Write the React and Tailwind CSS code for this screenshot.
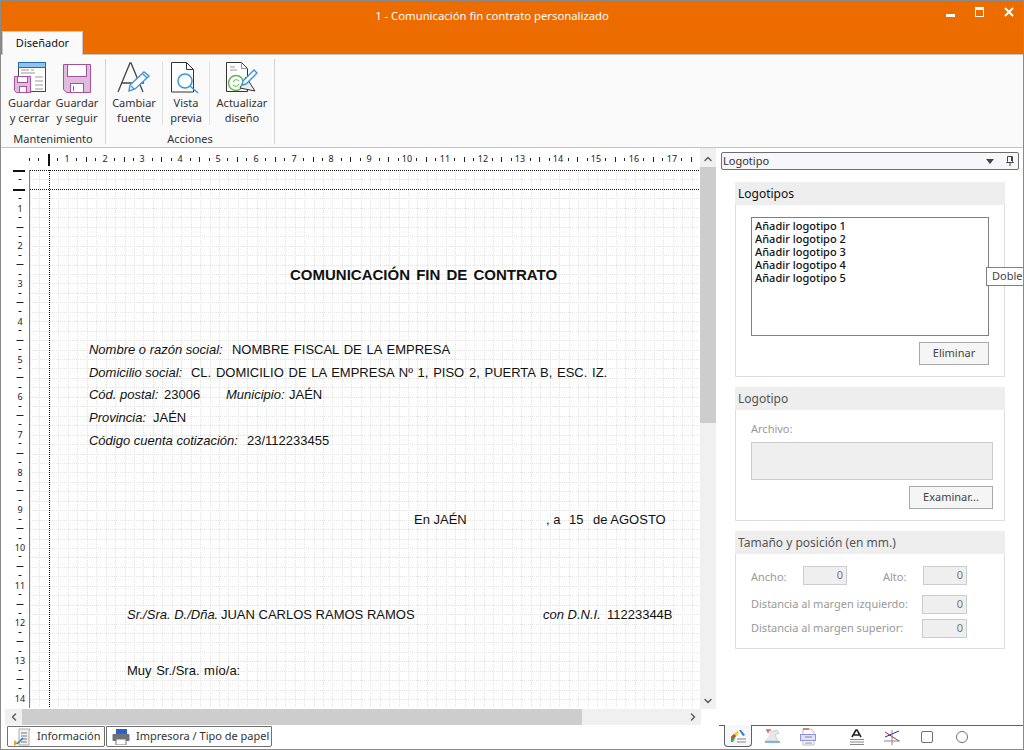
import { ChevronUp, ChevronDown, ChevronLeft, ChevronRight } from 'lucide-react'

const ui = 'font-["Noto_Sans",sans-serif]'

function range(n) {
  return Array.from({ length: n }, (_, i) => i)
}

function SaveCloseIcon() {
  return (
    <svg width="32" height="32" viewBox="0 0 32 32">
      <rect x="4.5" y="0.5" width="27" height="29" fill="#fff" stroke="#444" />
      <rect x="4.5" y="0.5" width="27" height="5" fill="#90c4ee" stroke="#1f6fb5" />
      <path d="M7 8h8M17 8h3M7 11h14M21 15h8M21 19h8M21 23h8M21 27h8" stroke="#999" strokeWidth="1" />
      <path d="M0.5 14.5h16v16h-14l-2-2z" fill="#e0bcdc" stroke="#a850a0" />
      <rect x="3.5" y="14.5" width="10" height="6" fill="#fff" stroke="#a850a0" />
      <rect x="5.5" y="24.5" width="7" height="6" fill="#fff" stroke="#a850a0" />
    </svg>
  )
}

function SaveIcon() {
  return (
    <svg width="30" height="30" viewBox="0 0 30 30">
      <path d="M1.5 0.5h27v28h-24l-3-3z" fill="#e0bcdc" stroke="#a850a0" />
      <rect x="5.5" y="0.5" width="19" height="12" fill="#fff" stroke="#a850a0" />
      <rect x="8.5" y="19.5" width="13" height="9" fill="#fff" stroke="#a850a0" />
      <path d="M11.5 22v5" stroke="#a850a0" />
    </svg>
  )
}

function FontIcon() {
  return (
    <svg width="34" height="32" viewBox="0 0 34 32">
      <path d="M1 30L13 1h1l12 29M5 21h22" fill="none" stroke="#444" strokeWidth="1.3" />
      <path d="M12 29l1-6L27 10l5 4-14 13z" fill="#fff" stroke="#3a96d8" strokeWidth="1.4" />
      <path d="M14 24l3 3M26 12l4 4" stroke="#3a96d8" strokeWidth="1.3" />
    </svg>
  )
}

function PreviewIcon() {
  return (
    <svg width="30" height="32" viewBox="0 0 30 32">
      <path d="M0.5 0.5h15l7 7v22.5h-22z" fill="#fff" stroke="#333" />
      <path d="M15.5 0.5v7h7" fill="none" stroke="#333" />
      <circle cx="14" cy="19" r="7" fill="#fff" stroke="#3a96d8" strokeWidth="1.5" />
      <path d="M19 24l8 7" stroke="#3a96d8" strokeWidth="1.5" />
    </svg>
  )
}

function RefreshIcon() {
  return (
    <svg width="32" height="32" viewBox="0 0 32 32">
      <path d="M0.5 0.5h15l6 6v23h-21z" fill="#fff" stroke="#333" />
      <path d="M15.5 0.5v6h6M4 5h5M4 8h7" fill="none" stroke="#999" />
      <circle cx="10" cy="21" r="7.5" fill="none" stroke="#5cb84c" strokeWidth="1.5" />
      <path d="M7 20a3.5 3.5 0 0 1 6-1M13 22a3.5 3.5 0 0 1-6 1" fill="none" stroke="#5cb84c" />
      <path d="M14 26l6-11 9 14z" fill="#eee" stroke="#333" />
      <path d="M16 23l1-4 11-11 3 3-11 11z" fill="#fff" stroke="#3a96d8" strokeWidth="1.4" />
    </svg>
  )
}

function RibbonButton({ icon, lines, className }) {
  return (
    <div className={`flex flex-col items-center ${className}`}>
      <div className="flex h-[32px] items-end justify-center">{icon}</div>
      <div className="mt-[1px] text-center text-[11px] leading-[15px] text-[#333]">
        {lines.map((l) => (
          <div key={l} className="whitespace-nowrap">{l}</div>
        ))}
      </div>
    </div>
  )
}

function TitleBar() {
  return (
    <div className="relative h-[53px] shrink-0 bg-[#ec6c00]">
      <div className="pr-[40px] pt-[6px] text-center text-[11.3px] leading-[18px] text-white">
        1 - Comunicación fin contrato personalizado
      </div>
      <div className="absolute right-[9px] top-[6px] flex items-start gap-[20px]">
        <div className="mt-[7px] h-[3px] w-[9px] bg-white" />
        <div className="h-[10px] w-[9px] border border-t-[3px] border-white" />
        <svg width="10" height="10" viewBox="0 0 10 10">
          <path d="M1 1l8 8M9 1l-8 8" stroke="#fff" strokeWidth="2" />
        </svg>
      </div>
      <div className="absolute bottom-[-1px] left-[1px] flex h-[24px] w-[81px] items-center justify-center border border-b-0 border-[#c8c8c8] bg-[#fafafa] text-[11px] text-[#111]">
        Diseñador
      </div>
    </div>
  )
}

function Ribbon() {
  return (
    <div className="flex h-[94px] shrink-0 border-t border-b border-[#c4c4c4] bg-[#fafafa] pt-[4px]">
      <div className="flex w-[104px] shrink-0 flex-col">
        <div className="flex pl-[5px] pt-[3px]">
          <RibbonButton icon={<SaveCloseIcon />} lines={['Guardar', 'y cerrar']} className="w-[47px]" />
          <RibbonButton icon={<SaveIcon />} lines={['Guardar', 'y seguir']} className="w-[48px]" />
        </div>
        <div className="mt-[6px] text-center text-[11px] leading-[15px] text-[#333]">Mantenimiento</div>
      </div>
      <div className="h-[85px] w-px shrink-0 bg-[#d4d4d4]" />
      <div className="flex w-[168px] shrink-0 flex-col">
        <div className="flex pt-[3px]">
          <RibbonButton icon={<FontIcon />} lines={['Cambiar', 'fuente']} className="w-[57px] border-r border-[#e0e0e0]" />
          <RibbonButton icon={<PreviewIcon />} lines={['Vista', 'previa']} className="w-[47px] border-r border-[#e0e0e0]" />
          <RibbonButton icon={<RefreshIcon />} lines={['Actualizar', 'diseño']} className="w-[64px]" />
        </div>
        <div className="mt-[6px] text-center text-[11px] leading-[15px] text-[#333]">Acciones</div>
      </div>
      <div className="h-[85px] w-px shrink-0 bg-[#d4d4d4]" />
    </div>
  )
}

function TopRuler() {
  const step = 37.8 / 4
  return (
    <svg width="672" height="21" className="block">
      {range(71).map((i) => {
        const x = Math.round(i * step)
        if (i % 4 === 0 && i > 0) {
          return (
            <text key={i} x={x} y="13" fontSize="9" fontFamily="Noto Sans" fill="#222" textAnchor="middle">
              {i / 4}
            </text>
          )
        }
        const h = i % 4 === 2 ? 5 : 3
        return <rect key={i} x={x} y={10.5 - h / 2} width="1" height={h} fill="#222" />
      })}
      <rect x="19" y="5" width="2" height="12" fill="#111" />
    </svg>
  )
}

function LeftRuler() {
  const step = 37.7 / 4
  return (
    <svg width="24" height="538" className="block">
      {range(57).map((i) => {
        const y = Math.round(i * step)
        if (i % 4 === 0 && i > 0) {
          return (
            <text key={i} x="15" y={y + 4} fontSize="9" fontFamily="Noto Sans" fill="#222" textAnchor="middle">
              {i / 4}
            </text>
          )
        }
        const w = i % 4 === 2 ? 7 : 3
        return <rect key={i} x={15 - w / 2} y={y} width={w} height="1" fill="#222" />
      })}
      <rect x="8" y="0" width="12" height="2" fill="#111" />
      <rect x="8" y="19" width="12" height="2" fill="#111" />
    </svg>
  )
}

function PaperGrid() {
  return (
    <svg width="672" height="538" className="absolute left-0 top-0">
      {range(71).map((i) => (
        <line key={`v${i}`} x1={Math.round(i * 9.45) + 0.5} y1="0" x2={Math.round(i * 9.45) + 0.5} y2="538" stroke="#e4e4e4" strokeDasharray="1 1" />
      ))}
      {range(57).map((i) => (
        <line key={`h${i}`} x1="0" y1={Math.round(i * 9.45) + 0.5} x2="672" y2={Math.round(i * 9.45) + 0.5} stroke="#e4e4e4" strokeDasharray="1 1" />
      ))}
      <line x1="0" y1="0.5" x2="672" y2="0.5" stroke="#111" strokeDasharray="1 1" />
      <line x1="0" y1="19.5" x2="672" y2="19.5" stroke="#111" strokeDasharray="1 1" />
      <line x1="19.5" y1="0" x2="19.5" y2="538" stroke="#111" strokeDasharray="1 1" />
    </svg>
  )
}

function DocRow({ className = '', children }) {
  return <div className={`flex h-[20px] whitespace-nowrap leading-[20px] ${className}`}>{children}</div>
}

function Paper() {
  return (
    <div className='relative h-[538px] w-[672px] overflow-hidden border-l border-[#808080] font-["Liberation_Sans",sans-serif] text-[13px] text-[#111]'>
      <PaperGrid />
      <div className="relative flex flex-col pl-[59px] pt-[95px]">
        <DocRow className="pl-[201px] text-[15px] font-bold [word-spacing:2px]">COMUNICACIÓN FIN DE CONTRATO</DocRow>
        <DocRow className="mt-[55px]">
          <span className="w-[143px] italic">Nombre o razón social:</span>
          <span className="[word-spacing:1.2px]">NOMBRE FISCAL DE LA EMPRESA</span>
        </DocRow>
        <DocRow className="mt-[3px]">
          <span className="w-[102px] italic">Domicilio social:</span>
          <span className="[word-spacing:1.1px]">CL. DOMICILIO DE LA EMPRESA Nº 1, PISO 2, PUERTA B, ESC. IZ.</span>
        </DocRow>
        <DocRow className="mt-[2px]">
          <span className="w-[75px] italic">Cód. postal:</span>
          <span className="w-[62px]">23006</span>
          <span className="w-[63px] italic">Municipio:</span>
          <span>JAÉN</span>
        </DocRow>
        <DocRow className="mt-[3px]">
          <span className="w-[64px] italic">Provincia:</span>
          <span>JAÉN</span>
        </DocRow>
        <DocRow className="mt-[3px]">
          <span className="w-[158px] italic">Código cuenta cotización:</span>
          <span>23/112233455</span>
        </DocRow>
        <DocRow className="mt-[59px] pl-[325px]">
          <span className="w-[132px]">En JAÉN</span>
          <span className="w-[23px]">, a</span>
          <span className="w-[24px]">15</span>
          <span>de AGOSTO</span>
        </DocRow>
        <DocRow className="mt-[75px] pl-[38px]">
          <span className="w-[94px] italic">Sr./Sra. D./Dña.</span>
          <span className="w-[322px]">JUAN CARLOS RAMOS RAMOS</span>
          <span className="w-[64px] italic">con D.N.I.</span>
          <span>11223344B</span>
        </DocRow>
        <DocRow className="mt-[36px] pl-[38px] [word-spacing:1px]">Muy Sr./Sra. mío/a:</DocRow>
      </div>
    </div>
  )
}

function VScrollbar() {
  return (
    <div className="flex w-[16px] shrink-0 flex-col bg-[#f0f0f0]">
      <div className="flex h-[19px] shrink-0 items-center justify-center pt-[3px]">
        <ChevronUp size={12} strokeWidth={3} className="text-[#606060]" />
      </div>
      <div className="h-[256px] shrink-0 bg-[#cdcdcd]" />
      <div className="flex-1" />
      <div className="flex h-[17px] shrink-0 items-center justify-center">
        <ChevronDown size={12} strokeWidth={3} className="text-[#606060]" />
      </div>
    </div>
  )
}

function HScrollbar() {
  return (
    <div className="ml-[4px] flex h-[16px] w-[696px] shrink-0 bg-[#f0f0f0]">
      <div className="flex w-[17px] shrink-0 items-center justify-center">
        <ChevronLeft size={12} strokeWidth={3} className="text-[#606060]" />
      </div>
      <div className="w-[560px] shrink-0 bg-[#cdcdcd]" />
      <div className="flex-1" />
      <div className="flex w-[17px] shrink-0 items-center justify-center">
        <ChevronRight size={12} strokeWidth={3} className="text-[#606060]" />
      </div>
    </div>
  )
}

function InfoIcon() {
  return (
    <svg width="18" height="18" viewBox="0 0 18 18">
      <path d="M5 1h11l-1 2v14H5z" fill="#f2f2f2" stroke="#aaa" />
      <path d="M7 5h6M7 8h6M7 11h6M7 14h6" stroke="#777" />
      <path d="M0 12l4 3-4 3z" fill="#f0a030" />
      <path d="M3 16l6-6" stroke="#2a7ac0" strokeWidth="1.5" />
    </svg>
  )
}

function PrinterIcon() {
  return (
    <svg width="18" height="16" viewBox="0 0 18 16">
      <rect x="4" y="0" width="11" height="5" fill="#2a62c8" />
      <rect x="0.5" y="5" width="17" height="7" rx="1" fill="#6e7378" />
      <rect x="4" y="10" width="10" height="6" fill="#fff" stroke="#777" />
    </svg>
  )
}

function BottomTab({ icon, label, className }) {
  return (
    <div className={`flex h-[21px] items-center rounded-b-[2px] border border-[#707070] text-[11px] text-[#333] ${className}`}>
      {icon}
      <span className="whitespace-nowrap">{label}</span>
    </div>
  )
}

function GroupBox({ title, disabled, className = '', children }) {
  return (
    <div className={`w-[270px] ${className}`}>
      <div className={`h-[23px] bg-[#eeeeee] pl-[3px] text-[12px] leading-[23px] ${disabled ? 'text-[#555]' : 'text-[#111]'}`}>
        {title}
      </div>
      <div className="border border-t-0 border-[#dddddd]">{children}</div>
    </div>
  )
}

function PanelButton({ label, className }) {
  return (
    <div className={`flex h-[23px] items-center justify-center border border-[#a8a8a8] bg-[#f5f5f5] text-[11px] text-[#444] ${className}`}>
      {label}
    </div>
  )
}

function NumBox({ className = '' }) {
  return (
    <div className={`h-[19px] border border-[#cccccc] bg-[#efefef] pr-[3px] text-right text-[11px] leading-[15px] text-[#777] ${className}`}>
      0
    </div>
  )
}

function Panel() {
  return (
    <div className="relative flex w-[307px] shrink-0 flex-col text-[#222]">
      <div className="ml-[5px] mt-[4px] flex h-[18px] w-[298px] items-center rounded-[2px] border border-[#6e6e6e] bg-[#f6f6fb] pl-[1px] pr-[4px] text-[11px] text-[#333]">
        <span className="flex-1">Logotipo</span>
        <svg width="8" height="5" viewBox="0 0 8 5" className="mr-[12px]">
          <path d="M0 0h8L4 5z" fill="#444" />
        </svg>
        <svg width="8" height="10" viewBox="0 0 8 10">
          <path d="M1.5 0.5h5v5l1 1h-7l1-1z" fill="#f6f6fb" stroke="#444" />
          <path d="M4 7v3" stroke="#444" />
          <path d="M5.5 1v4" stroke="#444" />
        </svg>
      </div>

      <div className="ml-[19px] mt-[12px] flex flex-col">
        <GroupBox title="Logotipos">
          <div className="pb-[11px] pl-[15px] pt-[12px]">
            <div className="h-[119px] w-[238px] border border-[#808080] bg-white pl-[3px] pt-[1px] text-[11px] font-medium leading-[13px] text-[#111]">
              <div>Añadir logotipo 1</div>
              <div>Añadir logotipo 2</div>
              <div>Añadir logotipo 3</div>
              <div>Añadir logotipo 4</div>
              <div>Añadir logotipo 5</div>
            </div>
            <PanelButton label="Eliminar" className="ml-[168px] mt-[6px] w-[70px]" />
          </div>
        </GroupBox>

        <GroupBox title="Logotipo" disabled className="mt-[10px]">
          <div className="pb-[11px] pl-[15px] pt-[11px]">
            <div className="text-[11px] leading-[15px] text-[#999]">Archivo:</div>
            <div className="mt-[6px] h-[38px] w-[242px] border border-[#cccccc] bg-[#efefef]" />
            <PanelButton label="Examinar..." className="ml-[158px] mt-[6px] w-[84px]" />
          </div>
        </GroupBox>

        <GroupBox title="Tamaño y posición (en mm.)" disabled className="mt-[10px]">
          <div className="h-[94px] pl-[15px] pt-[12px] text-[11px] leading-[19px] text-[#999]">
            <div className="flex">
              <span className="mt-[1px] w-[52px]">Ancho:</span>
              <NumBox className="w-[44px]" />
              <span className="mt-[1px] w-[76px] pl-[36px]">Alto:</span>
              <NumBox className="w-[44px]" />
            </div>
            <div className="mt-[9px] flex">
              <span className="w-[171px] whitespace-nowrap leading-[17px]">Distancia al margen izquierdo:</span>
              <NumBox className="w-[45px]" />
            </div>
            <div className="mt-[5px] flex">
              <span className="w-[171px] whitespace-nowrap leading-[17px]">Distancia al margen superior:</span>
              <NumBox className="w-[45px]" />
            </div>
          </div>
        </GroupBox>
      </div>

      <div className="absolute right-0 top-[119px] flex h-[19px] w-[37px] items-center overflow-hidden border border-r-0 border-[#808080] bg-white pl-[5px] text-[11px] text-[#444]">
        Doble
      </div>

      <div className="absolute bottom-0 left-[3px] flex h-[24px] w-[304px] items-start border-t border-[#606060] pl-[5px]">
        <div className="mt-[-1px] flex h-[22px] w-[28px] shrink-0 items-center justify-center rounded-b-[4px] border border-t-0 border-[#606060] bg-[#f6f6fb]">
          <svg width="16" height="14" viewBox="0 0 16 14">
            <path d="M1 13V8l3-3 2 2-3 6z" fill="#2eb43c" />
            <path d="M1 8l3-3 2 2-4 2z" fill="#e03a2a" />
            <path d="M4 5l3-3 2 1-2 4z" fill="#f2d028" />
            <path d="M9 1h2l4 5-2 1z" fill="#2f7ecb" />
            <path d="M7 10h9M7 13h9" stroke="#888" />
          </svg>
        </div>
        <svg width="16" height="16" viewBox="0 0 16 16" className="ml-[13px] mt-[3px] shrink-0">
          <path d="M1 1h5M3 1v3" stroke="#c02020" />
          <path d="M6 3l6-2 2 3-4 2 3 6H0" fill="#e8e8e8" stroke="#ccc" />
          <path d="M0 13h15" stroke="#7ab8e8" strokeWidth="2" />
        </svg>
        <svg width="16" height="18" viewBox="0 0 16 18" className="ml-[19px] mt-[2px] shrink-0">
          <path d="M3 1h8l3 3v13H3z" fill="#fff" stroke="#bbb" />
          <path d="M3 1h6" stroke="#d02020" />
          <rect x="0.5" y="6.5" width="15" height="6" fill="#e2e2fb" stroke="#8f8fe8" />
          <path d="M5 9h7M5 15h7" stroke="#888" />
        </svg>
        <svg width="16" height="16" viewBox="0 0 16 16" className="ml-[33px] mt-[3px] shrink-0">
          <path d="M3 8l4-7h1l4 7M5 6h5" fill="none" stroke="#222" strokeWidth="1.6" />
          <path d="M1 10.5h14M1 13h14M1 15.5h14" stroke="#888" />
        </svg>
        <svg width="16" height="16" viewBox="0 0 16 16" className="ml-[19px] mt-[3px] shrink-0">
          <path d="M1 3l14 9" stroke="#d02020" />
          <path d="M1 8l14-6" stroke="#2020d0" />
          <path d="M8 1v15M0 12h16" stroke="#888" />
        </svg>
        <div className="ml-[21px] mt-[5px] h-[12px] w-[12px] shrink-0 rounded-[2px] border border-[#707070]" />
        <div className="ml-[23px] mt-[5px] h-[12px] w-[12px] shrink-0 rounded-full border border-[#707070]" />
      </div>
    </div>
  )
}

export default function App() {
  return (
    <div className={`flex h-[750px] w-[1024px] flex-col overflow-hidden border border-[#8a8a8a] bg-white ${ui}`}>
      <TitleBar />
      <Ribbon />
      <div className="flex min-h-0 flex-1">
        <div className="flex w-[715px] shrink-0 flex-col">
          <div className="flex h-[561px] shrink-0">
            <div className="w-[699px] shrink-0 pl-[4px] pt-[1px]">
              <div className="pl-[24px]">
                <TopRuler />
              </div>
              <div className="flex">
                <LeftRuler />
                <Paper />
              </div>
            </div>
            <VScrollbar />
          </div>
          <HScrollbar />
          <div className="ml-[6px] mt-[1px] flex gap-[1px]">
            <BottomTab icon={<InfoIcon />} label="Información" className="w-[98px] gap-[5px] pl-[6px]" />
            <BottomTab icon={<PrinterIcon />} label="Impresora / Tipo de papel" className="w-[166px] gap-[6px] pl-[5px]" />
          </div>
        </div>
        <Panel />
      </div>
    </div>
  )
}
